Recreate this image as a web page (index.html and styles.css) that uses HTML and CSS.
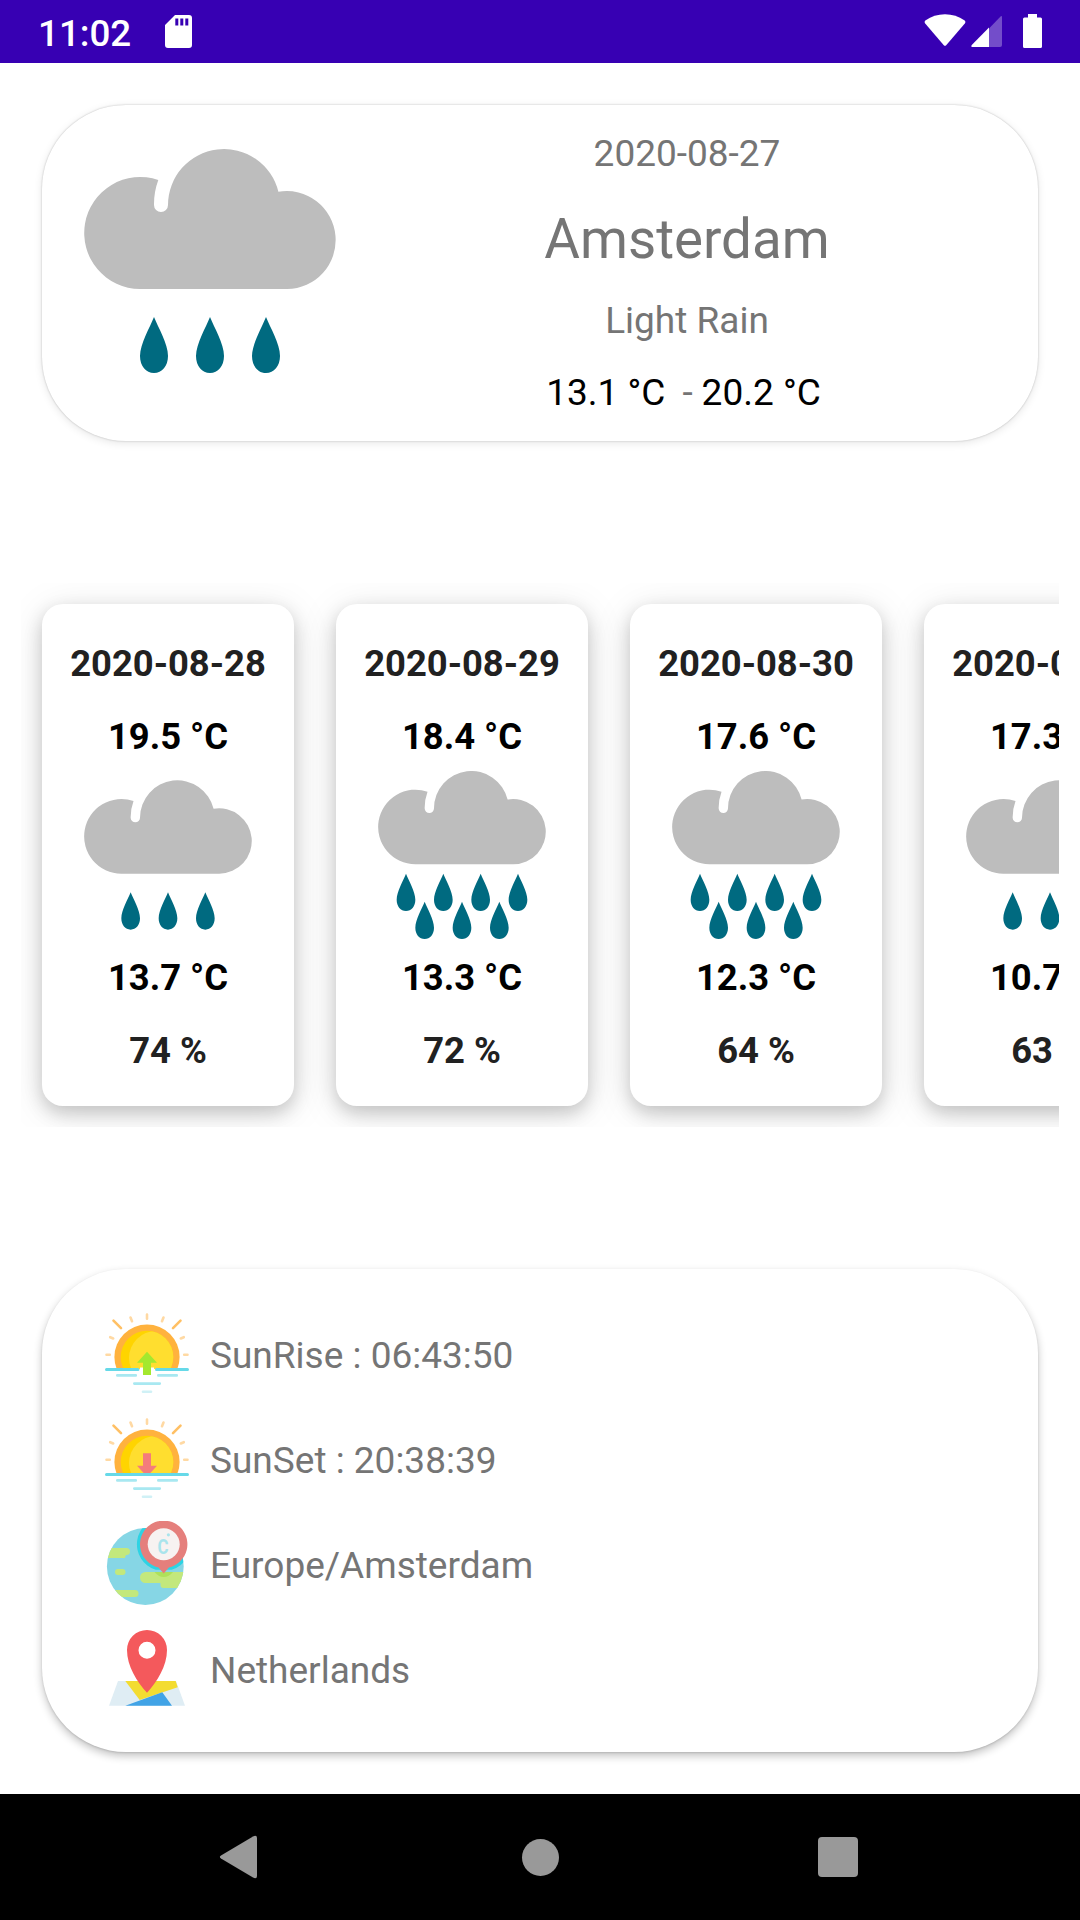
FILE: index.html
```html
<!DOCTYPE html>
<html lang="en">
<head>
<meta charset="utf-8">
<title>Weather</title>
<link rel="stylesheet" href="styles.css">
</head>
<body>
<svg class="defs" width="0" height="0" aria-hidden="true">
  <defs>
    <path id="cloud" fill="#bdbdbd" d="M74.3 31A70 70 0 0 0 70 56a7 7 0 0 0 14 0A56 56 0 0 1 194.4 42.7A49 49 0 1 1 203 140H56A56 56 0 1 1 74.3 31z"/>
    <path id="drop" fill="#006a80" d="M0 0C4 10 14 27 14 39C14 49 8 56 0 56S-14 49-14 39C-14 27-4 10 0 0z"/>
    <symbol id="light-rain" viewBox="0 -14 252 252">
      <use href="#cloud"/>
      <use href="#drop" x="70" y="168"/><use href="#drop" x="126" y="168"/><use href="#drop" x="182" y="168"/>
    </symbol>
    <symbol id="heavy-rain" viewBox="0 0 252 252">
      <use href="#cloud"/>
      <use href="#drop" x="42" y="154"/><use href="#drop" x="98" y="154"/><use href="#drop" x="154" y="154"/><use href="#drop" x="210" y="154"/>
      <use href="#drop" x="70" y="196"/><use href="#drop" x="126" y="196"/><use href="#drop" x="182" y="196"/>
    </symbol>
    <clipPath id="horizon"><rect width="84" height="58"/></clipPath>
    <clipPath id="disc"><circle cx="42" cy="46" r="26.3"/></clipPath>
    <clipPath id="globe"><circle cx="40.3" cy="45.5" r="38.4"/></clipPath>
    <g id="sun">
      <g clip-path="url(#horizon)">
        <circle cx="42" cy="46" r="32.6" fill="#ffb23e"/>
        <circle cx="42" cy="46" r="26.3" fill="#ffd400"/>
        <circle cx="51" cy="47" r="27" fill="#ffde2f" clip-path="url(#disc)"/>
      </g>
      <g fill="none" stroke-linecap="round" stroke-width="2.6">
        <path stroke="#ffd9a3" d="M42 3.500v4.300M25.500 6.500l1.500 3.700M58.500 6.500l-1.500 3.700M5.200 26.200l3 1.300M78.800 26.200l-3 1.300M1.500 43.700h3.300M79.200 43.700h3.300"/>
        <path stroke="#ffc064" d="M8.500 9.700l7.500 7.500M75.500 9.700l-7.500 7.500"/>
        <path stroke="#a8e8f1" d="M12.300 64.400h18.500M53.300 64.400h18.500M29.300 72.600h25.500"/>
        <path stroke="#d0f1f6" d="M38 80.700h8"/>
      </g>
    </g>
  </defs>
</svg>

<header class="status-bar">
  <span class="clock">11:02</span>
  <svg class="sd" width="27" height="33" viewBox="0 0 27 33"><path fill="#fff" fill-rule="evenodd" d="M10 0H24a3 3 0 0 1 3 3V30a3 3 0 0 1-3 3H3a3 3 0 0 1-3-3V10zM10.300 3.500v7h3v-7zM15.300 3.500v7h3v-7zM20.300 3.500v7h3v-7z"/></svg>
  <div class="signals">
    <svg width="42" height="34" viewBox="0 0 42 34"><path fill="#fff" d="M1.200 9.500Q-.2 7.700 1.700 6.300Q10 .2 21 .2T40.300 6.300Q42.200 7.700 40.800 9.500L22.200 31.200Q21 32.400 19.800 31.200z"/></svg>
    <svg width="32" height="34" viewBox="0 0 32 34"><path fill="#fff" opacity=".3" d="M18 14.500L29.300 2.700Q31 1.200 31 3.500V31q0 2-2 2H18z"/><path fill="#fff" d="M18 13.500V33H2Q-.8 33 1 30.700z"/></svg>
    <svg class="battery" width="19" height="34" viewBox="0 0 19 34"><path fill="#fff" d="M5 0h9v3.500h3.500q1.500 0 1.500 1.500v27.500q0 1.500-1.500 1.500h-16Q0 34 0 32.500V5Q0 3.500 1.500 3.500H5z"/></svg>
  </div>
</header>

<main class="screen">
  <section class="today">
    <svg class="today-icon"><use href="#light-rain"/></svg>
    <div class="today-info">
      <div class="today-date">2020-08-27</div>
      <div class="city">Amsterdam</div>
      <div class="summary">Light Rain</div>
      <div class="range"><span>13.1 °C</span><span class="dash">-</span><span>20.2 °C</span></div>
    </div>
  </section>

  <section class="forecast">
    <article class="day">
      <div class="day-date">2020-08-28</div>
      <div class="temp">19.5 °C</div>
      <svg class="day-icon"><use href="#light-rain"/></svg>
      <div class="temp">13.7 °C</div>
      <div class="humidity">74 %</div>
    </article>
    <article class="day">
      <div class="day-date">2020-08-29</div>
      <div class="temp">18.4 °C</div>
      <svg class="day-icon"><use href="#heavy-rain"/></svg>
      <div class="temp">13.3 °C</div>
      <div class="humidity">72 %</div>
    </article>
    <article class="day">
      <div class="day-date">2020-08-30</div>
      <div class="temp">17.6 °C</div>
      <svg class="day-icon"><use href="#heavy-rain"/></svg>
      <div class="temp">12.3 °C</div>
      <div class="humidity">64 %</div>
    </article>
    <article class="day">
      <div class="day-date">2020-08-31</div>
      <div class="temp">17.3 °C</div>
      <svg class="day-icon"><use href="#light-rain"/></svg>
      <div class="temp">10.7 °C</div>
      <div class="humidity">63 %</div>
    </article>
  </section>

  <section class="details">
    <div class="row">
      <svg viewBox="0 0 84 84"><use href="#sun"/>
        <path d="M1.500 58.500H33M51.500 58.500H82.500" stroke="#66d9e8" stroke-width="3" stroke-linecap="round"/>
        <path fill="#fff" d="M35 56.500h14v4H35z"/>
        <path fill="#a4e82e" d="M42 40.700L52 51.800H46V64H38V51.800H32z"/></svg>
      <span>SunRise : 06:43:50</span>
    </div>
    <div class="row">
      <svg viewBox="0 0 84 84"><use href="#sun"/>
        <path fill="#f47c7c" d="M38 37.300h8V49.700h6L44 58.500H40L32 49.700h6z"/>
        <path d="M1.500 58.500H82.500" stroke="#66d9e8" stroke-width="3" stroke-linecap="round"/></svg>
      <span>SunSet : 20:38:39</span>
    </div>
    <div class="row">
      <svg viewBox="0 0 84 84">
        <g clip-path="url(#globe)">
          <path fill="#86d6e5" d="M0 0h84v84H0z"/>
          <g fill="#c3e87c">
            <path d="M0 27H21.500a3.500 3.500 0 0 1 0 7Q20.300 34 20 37H0z"/>
            <rect x="10" y="48" width="10.500" height="6" rx="3"/>
            <path d="M8 69H30a3.500 3.500 0 0 1 0 7H8z"/>
            <path d="M40.500 51H84V67H58.500Q55.500 67 55.500 64V62H40.500a5.500 5.500 0 0 1 0-11z"/>
          </g>
          <path fill="#2dd3e4" d="M58.700-3.400a26.700 26.700 0 0 0-8 52.200h16a26.700 26.700 0 0 0-8-52.200z"/>
          <path fill="#aee15a" d="M49.500 51H68Q64 56 58.700 56T49.500 51z"/>
        </g>
        <path fill="#e57f7c" d="M53.500 46.400A23.700 23.700 0 1 1 63.900 46.400L58.700 52.500z"/>
        <circle cx="58.700" cy="23.300" r="16" fill="#f7f2f1"/>
        <text class="degree" x="58" y="33" textLength="11" lengthAdjust="spacingAndGlyphs">C</text>
        <circle cx="63.400" cy="13.800" r="1.600" fill="#a9e4ec"/>
      </svg>
      <span>Europe/Amsterdam</span>
    </div>
    <div class="row">
      <svg viewBox="0 0 84 84">
        <path fill="#dfedf4" d="M13 55H71L80 79.700H4z"/>
        <path fill="#f3dc31" d="M20.300 55H70.700L72.700 61.300L34.700 74z"/>
        <path fill="#41a3e6" d="M20.300 79.700L57.300 66.300L67 79.700z"/>
        <path fill="#f4595c" fill-rule="evenodd" d="M42 4A20 20 0 0 0 22 24C22 40 32 56 42 66.700C52 56 62 40 62 24A20 20 0 0 0 42 4zM42 15.800a8.500 8.500 0 1 1 0 17a8.500 8.500 0 1 1 0-17z"/>
      </svg>
      <span>Netherlands</span>
    </div>
  </section>
</main>

<nav class="nav-bar">
  <svg width="40" height="44" viewBox="0 0 40 44"><path fill="#999" d="M2 20.500L34 1.400Q38 -.3 38 3V41Q38 44.300 34 42.600L2 23.500Q-.3 22 2 20.500z"/></svg>
  <svg width="40" height="40" viewBox="0 0 40 40"><circle cx="21.500" cy="20.500" r="18.500" fill="#999"/></svg>
  <svg width="40" height="40" viewBox="0 0 40 40"><rect width="40" height="40" rx="4" fill="#999"/></svg>
</nav>
</body>
</html>
```
FILE: styles.css
```css
* { box-sizing: border-box; }

body {
  margin: 0;
  width: 1080px;
  height: 1920px;
  display: flex;
  flex-direction: column;
  overflow: hidden;
  background: #fff;
  color: #757575;
  font: 37px/50px Roboto, sans-serif;
}

svg { display: block; flex: none; }
.defs { position: absolute; }

.status-bar {
  height: 63px;
  flex: none;
  display: flex;
  align-items: flex-start;
  padding: 0 38px;
  background: #3700b3;
  color: #fff;
}
.clock { width: 127px; padding-top: 9px; font-size: 36.75px; font-weight: 500; }
.sd { margin-top: 15px; }
.signals { display: flex; gap: 5px; margin: 14px 0 0 auto; }
.battery { margin-left: 15px; }

.screen { flex: 1; display: flex; flex-direction: column; }

.today, .details { margin: 0 42px; border-radius: 84px; background: #fff; }

.today {
  height: 336px;
  margin-top: 42px;
  display: flex;
  padding: 0 42px;
  box-shadow: 0 0 2px rgba(0, 0, 0, .24), 0 2px 8px rgba(0, 0, 0, .1);
}
.today-icon { width: 252px; height: 252px; margin-top: 30px; }
.today-info { flex: 1; padding: 24px 0 0 42px; text-align: center; }
.city { margin: 23px 0 20px; font-size: 54.7px; line-height: 74px; }
.range { display: flex; justify-content: center; margin: 22px 7px 0 0; color: #000; }
.dash { margin: 0 9px 0 17px; color: #757575; }

.forecast {
  display: flex;
  gap: 42px;
  margin: 142px 21px 0;
  padding: 21px;
  overflow: hidden;
}
.day {
  flex: none;
  width: 252px;
  height: 502px;
  padding-top: 35px;
  border-radius: 21px;
  background: #fff;
  box-shadow: 0 7px 18px rgba(0, 0, 0, .19), 0 6px 40px rgba(0, 0, 0, .1);
  color: #212121;
  font-size: 36.4px;
  font-weight: 700;
  text-align: center;
}
.temp { color: #000; }
.day-date { margin-bottom: 23px; }
.day-icon { width: 168px; height: 168px; margin: 9px auto 14px; }
.humidity { margin-top: 23px; }

.details {
  height: 483px;
  margin-top: 142px;
  padding: 42px 63px 0;
  box-shadow: 0 4px 8px rgba(0, 0, 0, .24), 0 1px 2px rgba(0, 0, 0, .12);
}
.row { height: 105px; display: flex; gap: 21px; }
.row svg { width: 84px; height: 84px; }
.row span { padding-top: 20px; }
.degree { fill: #a9e4ec; font-size: 21px; font-weight: 700; text-anchor: middle; }

.nav-bar {
  height: 126px;
  flex: none;
  display: flex;
  align-items: center;
  justify-content: space-between;
  padding: 0 222px 0 219px;
  background: #000;
}
```
